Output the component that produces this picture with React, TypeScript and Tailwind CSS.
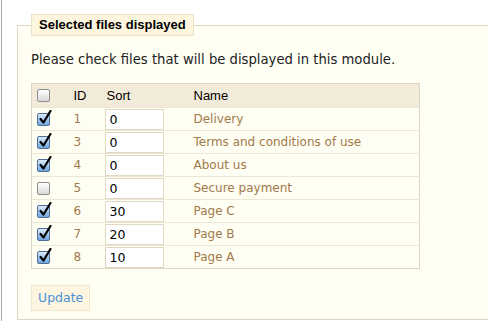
import React from 'react';

type Row = { id: number; sort: string; name: string; checked: boolean };

const rows: Row[] = [
  { id: 1, sort: '0', name: 'Delivery', checked: true },
  { id: 3, sort: '0', name: 'Terms and conditions of use', checked: true },
  { id: 4, sort: '0', name: 'About us', checked: true },
  { id: 5, sort: '0', name: 'Secure payment', checked: false },
  { id: 6, sort: '30', name: 'Page C', checked: true },
  { id: 7, sort: '20', name: 'Page B', checked: true },
  { id: 8, sort: '10', name: 'Page A', checked: true },
];

function Checkbox({ checked }: { checked: boolean }) {
  if (!checked) {
    return (
      <span className="block w-[13px] h-[13px] rounded-[2px] border border-[#8e8e8e] bg-gradient-to-b from-[#ffffff] to-[#d8d8d8]" />
    );
  }
  return (
    <span className="relative block w-[13px] h-[13px] rounded-[2px] border border-[#4f6f95] bg-gradient-to-b from-[#dcebfb] to-[#6ea6de]">
      <svg className="absolute left-[1px] top-[-4px]" width="13" height="15" viewBox="0 0 13 15">
        <path d="M1.5 9 L4.5 12.5 L11.5 1" fill="none" stroke="#000" strokeWidth="2.2" strokeLinecap="round" strokeLinejoin="round" />
      </svg>
    </span>
  );
}

export default function App() {
  return (
    <div className="h-[321px] w-[488px] overflow-hidden bg-white">
      <div className="h-full ml-[1px] border-l border-[#a9a9a9] pl-[15px] pt-[14px]">
        <fieldset className="w-[520px] border border-[#ddd6c6] bg-[#fffef3] pl-[13px] pb-[8px] font-['DejaVu_Sans',Verdana,sans-serif]">
          <legend className="h-[22px] px-[7px] border border-[#ebe2c9] bg-[#fdf5de] text-[13px] leading-[20px] font-bold text-black font-['Liberation_Sans',Arial,sans-serif]">
            Selected files displayed
          </legend>
          <p className="mt-[15px] text-[13.2px] leading-[17px] text-[#222]">
            Please check files that will be displayed in this module.
          </p>
          <table className="mt-[15px] w-[389px] border-collapse border border-[#ddd5c3] text-[12px]">
            <thead>
              <tr className="h-[24px] bg-[#f3ebda] text-left text-[13px] text-black font-['Liberation_Sans',Arial,sans-serif]">
                <th className="w-[36px] pl-[5px] font-normal align-middle">
                  <Checkbox checked={false} />
                </th>
                <th className="w-[35px] pl-[6px] font-normal">ID</th>
                <th className="w-[85px] pl-[4px] font-normal">Sort</th>
                <th className="pl-[6px] font-normal">Name</th>
              </tr>
            </thead>
            <tbody>
              {rows.map((r) => (
                <tr key={r.id} className="h-[23px] border-t border-[#ece6d6]">
                  <td className="pl-[5px] align-middle">
                    <Checkbox checked={r.checked} />
                  </td>
                  <td className="pl-[6px] text-[#a07a4c]">{r.id}</td>
                  <td className="pl-[2px] py-0">
                    <input
                      type="text"
                      defaultValue={r.sort}
                      className="block w-[59px] h-[21px] border border-[#e2d9c5] bg-white pl-[4px] text-[12.5px] text-black outline-none"
                    />
                  </td>
                  <td className="pl-[6px] text-[#a07a4c]">{r.name}</td>
                </tr>
              ))}
            </tbody>
          </table>
          <button className="mt-[16px] h-[26px] px-[6px] border border-[#efe6cf] bg-[#fdf5df] text-[12.5px] text-[#4b90d6]">
            Update
          </button>
        </fieldset>
      </div>
    </div>
  );
}
